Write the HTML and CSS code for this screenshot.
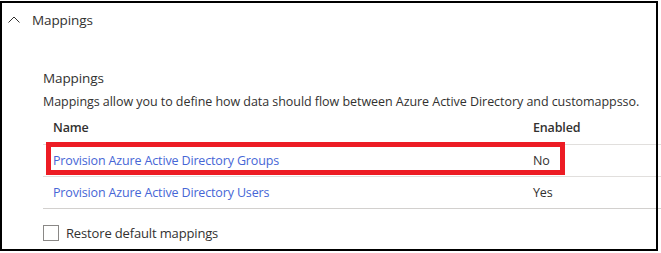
FILE: index.html
```html
<!DOCTYPE html>
<html>
<head>
<meta charset="utf-8">
<link rel="stylesheet" href="styles.css">
</head>
<body>
<div class="frame">
  <div class="hdr">
    <svg class="chev" width="12" height="7" viewBox="0 0 12 7"><path d="M0.5 6.5 L6 1 L11.5 6.5" fill="none" stroke="#323130" stroke-width="1"/></svg>
    <span class="hdr-title">Mappings</span>
  </div>
  <div class="body">
    <div class="title">Mappings</div>
    <div class="desc">Mappings allow you to define how data should flow between Azure Active Directory and customappsso.</div>
    <div class="table">
      <div class="row head"><div class="c1">Name</div><div class="c2">Enabled</div></div>
      <div class="row"><div class="c1"><a class="lnk">Provision Azure Active Directory Groups</a></div><div class="c2">No</div></div>
      <div class="row"><div class="c1"><a class="lnk">Provision Azure Active Directory Users</a></div><div class="c2">Yes</div></div>
    </div>
    <label class="chk"><span class="box"></span><span class="chk-lbl">Restore default mappings</span></label>
  </div>
  <div class="mark"></div>
</div>
</body>
</html>
```
FILE: styles.css
```css
html, body { margin: 0; padding: 0; background: #fff; }
body { font-family: "Open Sans", "Noto Sans", sans-serif; color: #323130; font-size: 12.5px; letter-spacing: -0.15px; }
.frame {
  position: relative;
  margin-top: 1px;
  width: 658px;
  height: 250px;
  outline: 2px solid #000;
  outline-offset: -2px;
}
.hdr { display: flex; align-items: center; padding: 9px 0 0 8px; height: 20px; line-height: 20px; }
.chev { display: block; margin-right: 12px; margin-top: -2px; }
.hdr-title { font-size: 13.5px; letter-spacing: -0.1px; }
.body { padding: 0 0 0 43px; }
.title { font-size: 13.5px; letter-spacing: -0.1px; line-height: 20px; margin-top: 38px; }
.desc { line-height: 20px; margin-top: 4px; white-space: nowrap; letter-spacing: -0.05px; }
.table { width: 620px; margin-top: 1px; }
.row { display: flex; height: 31px; line-height: 31px; border-bottom: 1px solid #e1dfdd; }
.row.head { font-weight: 600; line-height: 29px; }
.row + .row + .row { border-bottom-color: #d2d0ce; }
.c1 { width: 480px; padding-left: 10px; box-sizing: border-box; }
.c2 { padding-left: 10px; }
.lnk { color: #4666d6; text-decoration: none; }
.chk { display: flex; align-items: center; margin-top: 14px; }
.box { width: 16px; height: 16px; box-sizing: border-box; border: 1px solid #8a8886; margin-right: 7px; }
.chk-lbl { font-size: 13px; line-height: 20px; }
.mark {
  position: absolute;
  left: 46px; top: 141px;
  width: 519px; height: 33px;
  box-sizing: border-box;
  border: 5px solid #ed1c24;
}
```
